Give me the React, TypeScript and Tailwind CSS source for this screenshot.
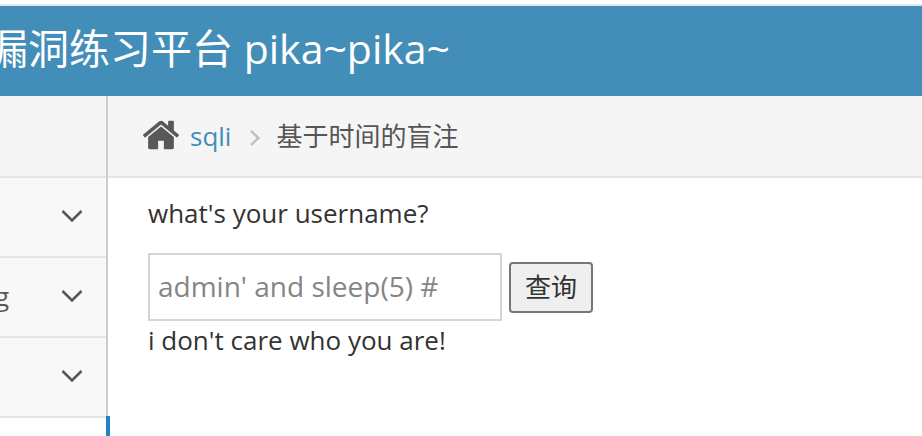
import React from "react";

const font = { fontFamily: '"Open Sans","Noto Sans CJK SC",sans-serif' };

function Chevron() {
  return (
    <svg width="22" height="14" viewBox="0 0 22 14" fill="none" stroke="#585858" strokeWidth="2.6" className="block">
      <path d="M1.5 2 L11 11.5 L20.5 2" />
    </svg>
  );
}

function HomeIcon() {
  return (
    <svg width="40" height="40" viewBox="0 0 1792 1792" fill="#585858" className="block mb-[2px]">
      <path d="M1472 992v480q0 26-19 45t-45 19h-384v-384h-256v384h-384q-26 0-45-19t-19-45v-480q0-1 .5-3t.5-3l575-474 575 474q1 2 1 6zm223-69l-62 74q-8 9-21 11h-3q-13 0-21-7l-692-577-692 577q-12 8-24 7-13-2-21-11l-62-74q-8-10-7-23.500t11-21.500l719-599q32-26 76-26t76 26l244 204v-195q0-14 9-23t23-9h192q14 0 23 9t9 23v408l219 182q10 8 11 21.500t-7 23.500z" />
    </svg>
  );
}

function SideRow({ label }: { label?: string }) {
  return (
    <div className="h-[80px] flex items-center justify-end bg-[#f8f8f8] border-b-2 border-[#e5e5e5] relative overflow-hidden pr-[23px] pb-[2px]">
      {label && <span className="absolute right-[97px] top-[20px] text-[26px] leading-[36px] text-[#585858] whitespace-nowrap">{label}</span>}
      <Chevron />
    </div>
  );
}

export default function App() {
  return (
    <div style={font} className="w-[922px] h-[436px] overflow-hidden bg-white flex flex-col">
      <div className="h-[4px] bg-white" />
      <div className="h-[2px] bg-[#e4e4e4]" />
      <div className="h-[90px] bg-[#438eb9] flex items-center overflow-hidden text-white pb-[6px]">
        <span className="text-[41px] leading-[56px] whitespace-nowrap ml-[-13px]">漏洞练习平台 pika~pika~</span>
      </div>
      <div className="flex flex-1 min-h-0">
        <div className="w-[108px] shrink-0 border-r-2 border-[#cccccc] flex flex-col">
          <div className="h-[82px] bg-[#f5f5f5] border-b-2 border-[#e5e5e5]" />
          <SideRow />
          <SideRow label="Cross-Site Scripting" />
          <SideRow />
        </div>
        <div className="flex-1 min-w-0 flex flex-col relative">
          <div className="absolute left-[-2px] bottom-0 w-[4px] h-[20px] bg-[#2283c5]" />
          <div className="h-[82px] bg-[#f5f5f5] border-b-2 border-[#e5e5e5] flex items-center pl-[33px] text-[26px]">
            <HomeIcon />
            <a className="ml-[9px] text-[#438eb9]">sqli</a>
            <svg width="12" height="18" viewBox="0 0 12 18" fill="none" stroke="#b8bfc9" strokeWidth="2.4" className="ml-[18px] mt-[4px]">
              <path d="M2 2 L9.5 9 L2 16" />
            </svg>
            <span className="ml-[15px] text-[#555555]">基于时间的盲注</span>
          </div>
          <div className="pl-[40px] text-[26px] text-[#333333]">
            <p className="leading-[36px] mt-[17px]">what's your username?</p>
            <div className="flex items-end mt-[22px]">
              <input
                readOnly
                placeholder="admin' and sleep(5) #"
                className="w-[354px] h-[68px] border-2 border-[#d5d5d5] bg-white px-[8px] pb-[2px] outline-none text-[28px] text-[#333] placeholder:text-[#858585]"
              />
              <button className="ml-[7px] mb-[8px] w-[84px] h-[51px] bg-[#efefef] border-2 border-[#767676] rounded-[4px] text-[#333]">查询</button>
            </div>
            <p className="leading-[36px] mt-[1px]">i don't care who you are!</p>
          </div>
        </div>
      </div>
    </div>
  );
}
